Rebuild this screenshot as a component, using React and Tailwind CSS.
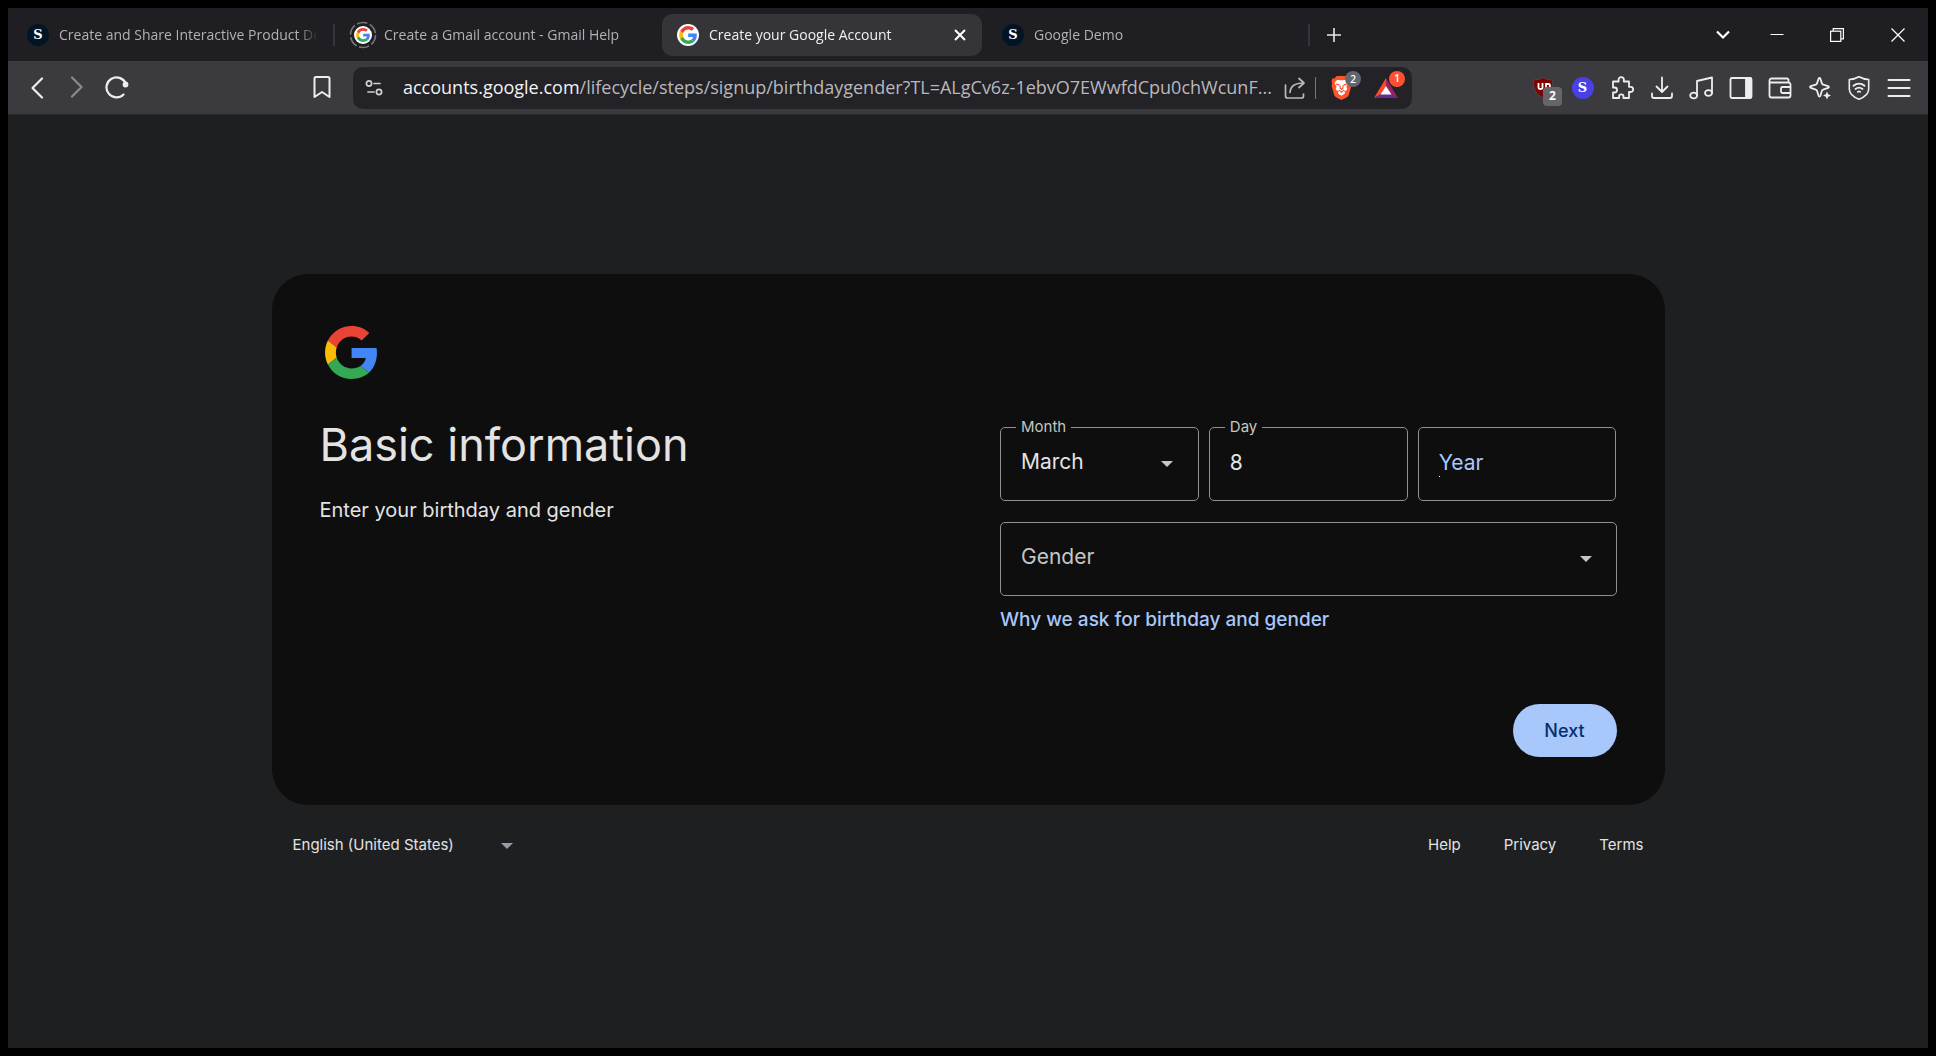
import { useState } from "react";

const TABS = [
  { id: 1, title: "Create and Share Interactive Product Dem", icon: "s" },
  { id: 2, title: "Create a Gmail account - Gmail Help", icon: "g-ring" },
  { id: 3, title: "Create your Google Account", icon: "g" },
  { id: 4, title: "Google Demo", icon: "s" },
];

const MONTHS = [
  "January", "February", "March", "April", "May", "June",
  "July", "August", "September", "October", "November", "December",
];

function GoogleG({ className }) {
  return (
    <svg viewBox="0 0 47 48" className={className} aria-hidden="true">
      <path fill="#EA4335" d="M24 9.5c3.54 0 6.71 1.22 9.21 3.6l6.85-6.85C35.9 2.38 30.47 0 24 0 14.62 0 6.51 5.38 2.56 13.22l7.98 6.19C12.43 13.72 17.74 9.5 24 9.5z" />
      <path fill="#4285F4" d="M46.98 24.55c0-1.57-.15-3.09-.38-4.55H24v9.02h12.94c-.58 2.96-2.26 5.48-4.78 7.18l7.73 6c4.51-4.18 7.09-10.36 7.09-17.65z" />
      <path fill="#FBBC05" d="M10.53 28.59c-.48-1.45-.76-2.99-.76-4.59s.27-3.14.76-4.59l-7.98-6.19C.92 16.46 0 20.12 0 24c0 3.88.92 7.54 2.56 10.78l7.97-6.19z" />
      <path fill="#34A853" d="M24 48c6.48 0 11.93-2.13 15.89-5.81l-7.73-6c-2.15 1.45-4.92 2.3-8.16 2.3-6.26 0-11.57-4.22-13.47-9.91l-7.98 6.19C6.51 42.62 14.62 48 24 48z" />
    </svg>
  );
}

function Favicon({ icon }) {
  if (icon === "s") {
    return (
      <span className="flex size-[22px] shrink-0 items-center justify-center rounded-full bg-[#021526] font-['DejaVu_Serif',serif] text-[13px] leading-none font-bold text-white">
        S
      </span>
    );
  }
  if (icon === "g-ring") {
    return (
      <span className="relative flex size-[22px] shrink-0 items-center justify-center rounded-full">
        <svg viewBox="0 0 28 28" className="absolute -inset-[3px] size-7" fill="none" stroke="#77767b" strokeWidth="1.6">
          <circle cx="14" cy="14" r="12.5" strokeDasharray="10.5 2.6" />
        </svg>
        <span className="flex size-[18px] items-center justify-center rounded-full bg-white">
          <GoogleG className="size-[14px]" />
        </span>
      </span>
    );
  }
  return (
    <span className="flex size-[22px] shrink-0 items-center justify-center rounded-full bg-white">
      <GoogleG className="size-[18px]" />
    </span>
  );
}

function Tab({ tab, active, onSelect }) {
  return (
    <div
      className={`flex h-[42px] w-80 min-w-0 items-center rounded-[10px] pl-[15px] pr-[14px] ${
        active ? "bg-[#353439] text-[#f0f0f2]" : "text-[#b2b1b5]"
      }`}
    >
      <button onClick={onSelect} className="flex min-w-0 flex-1 items-center gap-[10px] text-left text-sm">
        <Favicon icon={tab.icon} />
        <span className="min-w-0 flex-1 overflow-hidden whitespace-nowrap [mask-image:linear-gradient(to_right,black_92%,transparent)]">
          {tab.title}
        </span>
      </button>
      {active && (
        <button aria-label="Close tab" className="mr-0.5 text-white">
          <svg viewBox="0 0 12 12" className="size-3" stroke="currentColor" strokeWidth="2">
            <path d="M1 1l10 10M11 1L1 11" />
          </svg>
        </button>
      )}
    </div>
  );
}

function TabStrip() {
  const [activeId, setActiveId] = useState(3);

  return (
    <div className="flex h-[53px] items-center bg-[#1f1e23] pl-1">
      <div className="flex min-w-0 items-center gap-0.5">
        {TABS.map((tab) => (
          <div key={tab.id} className="flex min-w-0 items-center gap-px">
            <Tab tab={tab} active={tab.id === activeId} onSelect={() => setActiveId(tab.id)} />
            <span className={`h-[22px] w-0.5 ${tab.id === 1 || tab.id === 4 ? "bg-[#35343a]" : ""}`} />
          </div>
        ))}
      </div>
      <button aria-label="New tab" className="ml-4 text-[#e8e8ea]">
        <svg viewBox="0 0 16 16" className="size-4" stroke="currentColor" strokeWidth="1.6">
          <path d="M8 1v14M1 8h14" />
        </svg>
      </button>

      <div className="ml-auto flex items-center pr-[23px] text-white">
        <button aria-label="Search tabs" className="mr-10">
          <svg viewBox="0 0 14 10" className="h-[10px] w-[14px]" fill="none" stroke="currentColor" strokeWidth="2.2">
            <path d="M1 1.5l6 6 6-6" />
          </svg>
        </button>
        <button aria-label="Minimize" className="mr-[46px]">
          <svg viewBox="0 0 14 14" className="size-[14px]" stroke="currentColor">
            <path d="M0.5 6.5h13" />
          </svg>
        </button>
        <button aria-label="Restore" className="mr-[47px]">
          <svg viewBox="0 0 14 14" className="size-[14px]" fill="none" stroke="currentColor" strokeWidth="1.2">
            <rect x="0.6" y="3.2" width="10.2" height="10.2" />
            <path d="M3.2 3V.6h10.2v10.2H11" />
          </svg>
        </button>
        <button aria-label="Close window">
          <svg viewBox="0 0 14 14" className="size-[14px]" stroke="currentColor" strokeWidth="1.2">
            <path d="M0.5 0.5l13 13M13.5 0.5l-13 13" />
          </svg>
        </button>
      </div>
    </div>
  );
}

function LineIcon({ label, children }) {
  return (
    <button aria-label={label} className="text-[#ededf0]">
      <svg
        viewBox="0 0 24 24"
        className="size-6"
        fill="none"
        stroke="currentColor"
        strokeWidth="1.8"
        strokeLinecap="round"
        strokeLinejoin="round"
      >
        {children}
      </svg>
    </button>
  );
}

function AddressBar() {
  return (
    <div className="flex h-[42px] min-w-0 flex-1 items-center rounded-[10px] bg-[#232227] pl-3 pr-[13px]">
      <button aria-label="View site information" className="shrink-0 text-[#d0d0d4]">
        <svg viewBox="0 0 18 18" className="size-[18px]" fill="none" stroke="currentColor" strokeWidth="1.7" strokeLinecap="round">
          <circle cx="4" cy="4.5" r="2.6" />
          <path d="M9 4.5h6" />
          <circle cx="14" cy="13" r="2.6" />
          <path d="M3 13h6" />
        </svg>
      </button>
      <div className="ml-5 min-w-0 flex-1 truncate pb-0.5 text-lg text-[#b9b8bd]">
        <span className="text-[#f2f2f4]">accounts.google.com</span>
        /lifecycle/steps/signup/birthdaygender?TL=ALgCv6z-1ebvO7EWwfdCpu0chWcunF...
      </div>
      <button aria-label="Share this page" className="shrink-0 text-[#b9b8bd]">
        <svg viewBox="0 0 22 22" className="size-[22px]" fill="none" stroke="currentColor" strokeWidth="1.7" strokeLinecap="round" strokeLinejoin="round">
          <path d="M1.500 8v11a2 2 0 0 0 2 2h14a2 2 0 0 0 2-2v-2" />
          <path d="M6 15.500c.3-5.500 4-9.500 13.500-9.500M15 1.500l5 4.500-5 4.500" />
        </svg>
      </button>
      <span className="ml-[9px] h-[22px] w-px shrink-0 bg-[#77767c]" />
      <button aria-label="Brave Shields" className="relative ml-[15px] shrink-0">
        <svg viewBox="0 0 22 26" className="h-[25px] w-[21px]">
          <path fill="#fb542b" d="M6 1h10l2.500 2.500 2-.2L21.500 7l-.8 2 .8 2-3 10.500c-.5 1.500-6 4.300-7.500 4.500-1.500-.2-7-3-7.500-4.500L.5 11l.8-2-.8-2 1-3.700 2 .2z" />
          <path fill="#fff" d="M11 5.500c2 0 3-.8 4.500-.3 1.200.5 2.800 2.800 2.600 3.800-.2.900-2 2.500-2 3.300s1.200 1.700.8 2.700c-.5 1.300-2.500 1.500-3 1.600l.8 2.200c0 .9-2.700 2.600-3.700 2.600s-3.700-1.700-3.700-2.600l.8-2.200c-.5-.1-2.500-.3-3-1.600-.4-1 .8-1.900.8-2.700S4.100 9.900 3.900 9c-.2-1 1.400-3.300 2.600-3.800C8 4.700 9 5.500 11 5.500z" />
          <path fill="none" stroke="#fb542b" strokeWidth="1.200" d="M5.500 9.500l3.500 1M16.500 9.500l-3.500 1M9.500 11v2.500L11 15l1.500-1.500V11M8 15.500l3 2.500 3-2.500" />
        </svg>
        <span className="absolute -top-1 left-[14px] flex size-4 items-center justify-center rounded-full bg-[#636570] text-[10px] font-semibold text-white">
          2
        </span>
      </button>
      <button aria-label="Brave Rewards" className="relative ml-[21px] shrink-0">
        <svg viewBox="0 0 26 22" className="h-[22px] w-[26px]">
          <path fill="#ff4724" d="M13 1v9l-5.500 8L1 21z" />
          <path fill="#9e1f63" d="M13 1l12 20-6.500-3L13 9z" />
          <path fill="#662d91" d="M1 21l6.500-4h11l6.500 4z" />
          <path fill="#fff" d="M13 9l5.500 8.500h-11z" />
        </svg>
        <span className="absolute -top-1.5 left-4 flex size-4 items-center justify-center rounded-full bg-[#ff5030] text-[10px] font-semibold text-white">
          1
        </span>
      </button>
    </div>
  );
}

function Toolbar() {
  return (
    <div className="flex h-[54px] items-center border-b border-[#29282d] bg-[#3b3a3f]">
      <div className="flex w-[345px] shrink-0 items-center pl-[17px] pr-[19px]">
        <LineIcon label="Back">
          <path strokeWidth="2.2" d="M17 2.500L7.500 12l9.500 9.500" />
        </LineIcon>
        <span className="ml-4 leading-none opacity-45">
          <LineIcon label="Forward">
            <path strokeWidth="2.2" d="M7 2.500l9.500 9.500L7 21.500" />
          </LineIcon>
        </span>
        <span className="ml-4 leading-none">
          <LineIcon label="Reload">
            <path strokeWidth="2.2" d="M18.500 19.500a10 10 0 1 1 2.200-11" />
            <circle cx="20.500" cy="9.500" r="2" fill="currentColor" />
          </LineIcon>
        </span>
        <span className="ml-auto leading-none">
          <LineIcon label="Bookmark this tab">
            <path strokeWidth="2" d="M6 2h12a1.500 1.500 0 0 1 1.500 1.500v18.500L12 17l-7.500 5V3.500A1.500 1.500 0 0 1 6 2z" />
          </LineIcon>
        </span>
      </div>

      <AddressBar />

      <div className="flex w-[516px] shrink-0 justify-end pr-[17px]">
        <div className="flex w-[380px] items-center justify-between">
          <button aria-label="uBlock Origin" className="relative size-6">
            <svg viewBox="0 0 24 24" className="size-6">
              <path fill="#800000" stroke="#55555a" strokeWidth=".6" d="M12 1.500c2.500 1.700 6 2.500 9.500 2.500 0 8-1 13-9.500 18C3.500 17 2.500 12 2.500 4 6 4 9.500 3.200 12 1.500z" />
              <path fill="none" stroke="#fff" strokeWidth="1.800" d="M7.500 7v4.500c0 2 4 2 4 0V7M15 7v6M15 8h2.500c2 0 2 4 0 4H15" />
            </svg>
            <span className="absolute left-3 top-[11px] flex size-[19px] items-center justify-center rounded bg-[#66666a] text-xs font-bold text-white">
              2
            </span>
          </button>
          <button aria-label="Supademo" className="flex size-6 items-center justify-center">
            <span className="flex size-[22px] items-center justify-center rounded-full bg-[#4a40e8] font-['DejaVu_Serif',serif] text-[13px] leading-none font-bold text-white">
              S
            </span>
          </button>
          <LineIcon label="Extensions">
            <path d="M3 5.500h5.500c.4-.4 0-1 0-1.700a2.700 2.700 0 0 1 5.400 0c0 .7-.4 1.300 0 1.700h5.100v5.300c.4.400 1 0 1.600 0a2.600 2.600 0 0 1 0 5.200c-.6 0-1.200-.4-1.600 0v6h-5.500c-.4-.4 0-1 0-1.500a2.200 2.200 0 0 0-4.400 0c0 .5.4 1.100 0 1.500H3v-5.500c.4-.4 1 0 1.500 0a2.500 2.500 0 0 0 0-5c-.5 0-1.100.4-1.500 0z" />
          </LineIcon>
          <LineIcon label="Downloads">
            <path d="M12 1.500v14M6.500 10.500L12 16l5.500-5.500M2 17.500v2.500a2 2 0 0 0 2 2h16a2 2 0 0 0 2-2v-2.500" />
          </LineIcon>
          <LineIcon label="Media controls">
            <path d="M8 19V5l15-3.500V17M8 5l15-3.500" />
            <ellipse cx="4.700" cy="19.500" rx="3.500" ry="2.900" />
            <ellipse cx="19.500" cy="17" rx="3.500" ry="2.900" />
          </LineIcon>
          <LineIcon label="Sidebar">
            <rect x="1.500" y="2" width="21" height="20" rx="1.500" />
            <path d="M17 2.500h5v19h-5z" fill="currentColor" />
          </LineIcon>
          <LineIcon label="Wallet">
            <path d="M20.500 6.500V4a1.500 1.500 0 0 0-1.500-1.500H3.500A2 2 0 0 0 1.500 4.500v15a2 2 0 0 0 2 2h17a2 2 0 0 0 2-2V8.500a2 2 0 0 0-2-2H2M22 11h-7.500a1.500 1.500 0 0 0-1.500 1.500v3a1.500 1.500 0 0 0 1.500 1.500H22" />
          </LineIcon>
          <LineIcon label="Leo AI">
            <path d="M11.500 2c.5 0 .7.3.9.800l1.500 4.600c.2.600.6 1 1.200 1.200l5 1.600c1.100.4 1.100 1.200 0 1.600l-5 1.800c-.6.200-1 .6-1.200 1.200l-1.500 5c-.4 1.100-1.400 1.100-1.800 0l-1.600-5c-.2-.6-.6-1-1.200-1.200l-5-1.800c-1.100-.4-1.100-1.200 0-1.600l5-1.600c.6-.2 1-.6 1.200-1.200l1.600-4.600c.2-.5.4-.8.900-.8z" />
            <path d="M19 15.500l1.200 2.800 2.800 1.200-2.800 1.200L19 23.500l-1.200-2.800-2.800-1.200 2.800-1.200z" fill="currentColor" stroke="none" />
          </LineIcon>
          <LineIcon label="VPN">
            <path strokeWidth="1.600" d="M12 .8c2.800 1.700 6 2.600 9.700 2.700V13c0 4.500-4.700 8.300-9.700 10.200C7 21.300 2.300 17.500 2.300 13V3.500C6 3.400 9.200 2.500 12 .8z" />
            <path strokeWidth="1.800" d="M6.500 9.800c3.300-2.800 7.700-2.800 11 0M8.500 13c2.200-1.800 4.800-1.800 7 0M10.800 15.900c.8-.6 1.600-.6 2.400 0" />
          </LineIcon>
          <LineIcon label="Menu">
            <path strokeWidth="2" d="M1.500 4h21M1.500 12h21M1.500 20h21" />
          </LineIcon>
        </div>
      </div>
    </div>
  );
}

function Caret({ className }) {
  return (
    <svg viewBox="0 0 12 6" className={`pointer-events-none absolute h-1.5 w-3 ${className}`} fill="currentColor">
      <path d="M0 0h12L6 6z" />
    </svg>
  );
}

const fieldClass =
  "block h-[74px] w-full appearance-none rounded-[5px] border border-[#8e918f] bg-transparent px-5 pb-1 text-[21px] outline-none";
const floatClass = "absolute -top-[11px] left-4 bg-[#0e0e0e] px-[5px] text-[15px] leading-[22px] text-[#c4c7c5]";

function BirthdayForm() {
  const [month, setMonth] = useState("March");
  const [day, setDay] = useState("8");
  const [year, setYear] = useState("");
  const [gender, setGender] = useState("");

  return (
    <form className="flex flex-col" onSubmit={(e) => e.preventDefault()}>
      <div className="grid grid-cols-3 gap-[10px]">
        <div className="relative">
          <select
            id="month"
            value={month}
            onChange={(e) => setMonth(e.target.value)}
            className={`${fieldClass} text-[#e3e3e3]`}
          >
            {MONTHS.map((m) => (
              <option key={m}>{m}</option>
            ))}
          </select>
          <label htmlFor="month" className={floatClass}>Month</label>
          <Caret className="right-[26px] top-[34px] text-[#c4c7c5]" />
        </div>
        <div className="relative">
          <input
            id="day"
            value={day}
            onChange={(e) => setDay(e.target.value)}
            className={`${fieldClass} text-[#e3e3e3]`}
          />
          <label htmlFor="day" className={floatClass}>Day</label>
        </div>
        <div className="relative">
          <input
            aria-label="Year"
            placeholder="Year"
            value={year}
            onChange={(e) => setYear(e.target.value)}
            className={`${fieldClass} placeholder:text-[#a8c7fa]`}
          />
          <span className="absolute left-[21px] top-[49px] size-px bg-white" />
        </div>
      </div>

      <div className="relative mt-[21px]">
        <select
          aria-label="Gender"
          value={gender}
          onChange={(e) => setGender(e.target.value)}
          className={`${fieldClass} text-[#c4c7c5]`}
        >
          <option value="" hidden>Gender</option>
          <option>Female</option>
          <option>Male</option>
          <option>Rather not say</option>
          <option>Custom</option>
        </select>
        <Caret className="right-[25px] top-[34px] text-[#c4c7c5]" />
      </div>

      <a href="#why" className="mt-3 self-start text-[19px] leading-6 font-medium text-[#a8c7fa]">
        Why we ask for birthday and gender
      </a>

      <button
        type="submit"
        className="mt-[72px] h-[53px] w-[104px] self-end rounded-full bg-[#a8c7fa] text-lg font-medium text-[#062e6f]"
      >
        Next
      </button>
    </form>
  );
}

function Footer() {
  return (
    <footer className="flex items-center justify-between px-[21px] pt-7 text-[15px] leading-6 text-[#e3e3e3]">
      <div className="relative">
        <select aria-label="Language" className="w-[220px] appearance-none bg-transparent outline-none">
          <option>English (United States)</option>
        </select>
        <Caret className="right-0 top-[10px] text-[#9a9aa8]" />
      </div>
      <nav className="flex gap-[43px]">
        <a href="#help">Help</a>
        <a href="#privacy">Privacy</a>
        <a href="#terms">Terms</a>
      </nav>
    </footer>
  );
}

export default function App() {
  return (
    <div className="flex min-h-screen flex-col bg-black p-2">
      <header className="font-['Open_Sans',sans-serif]">
        <TabStrip />
        <Toolbar />
      </header>

      <main className="flex flex-1 flex-col bg-[#1e1f20] px-6 pt-[159px] font-['Inter',sans-serif]">
        <div className="mx-auto w-full max-w-[1393px]">
          <section className="rounded-[36px] bg-[#0e0e0e] px-12 pb-12 pt-[52px]">
            <GoogleG className="ml-[5px] h-[53px] w-[52px]" />
            <div className="mt-12 grid grid-cols-2 gap-16">
              <div>
                <h1 className="-mt-[10px] text-[45px] leading-[56px] text-[#e3e3e3]">Basic information</h1>
                <p className="mt-[22px] text-xl leading-[30px] text-[#e3e3e3]">Enter your birthday and gender</p>
              </div>
              <BirthdayForm />
            </div>
          </section>
          <Footer />
        </div>
      </main>
    </div>
  );
}
